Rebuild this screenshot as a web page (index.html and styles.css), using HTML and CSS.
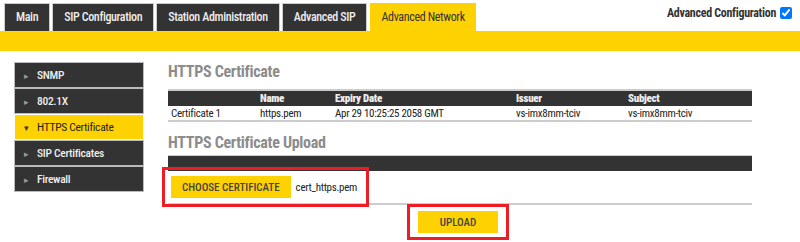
FILE: index.html
```html
<!DOCTYPE html>
<html lang="en">
<head>
    <meta charset="UTF-8">
    <meta name="viewport" content="width=device-width, initial-scale=1.0">
    <title>Advanced Network</title>
    <link rel="stylesheet" href="styles.css">
</head>
<body>
    <div class="header">
        <div class="tabs">
            <div class="tab">Main</div>
            <div class="tab">SIP Configuration</div>
            <div class="tab">Station Administration</div>
            <div class="tab">Advanced SIP</div>
            <div class="tab active">Advanced Network</div>
        </div>
        <label class="advanced">Advanced Configuration <input type="checkbox" checked></label>
    </div>
    <div class="bar"></div>

    <div class="page">
        <ul class="menu">
            <li><span class="arrow">&#9656;</span>SNMP</li>
            <li><span class="arrow">&#9656;</span>802.1X</li>
            <li class="selected"><span class="arrow">&#9662;</span>HTTPS Certificate</li>
            <li><span class="arrow">&#9656;</span>SIP Certificates</li>
            <li><span class="arrow">&#9656;</span>Firewall</li>
        </ul>

        <div class="content">
            <h3>HTTPS Certificate</h3>
            <table class="table">
                <thead>
                    <tr>
                        <th class="c1"></th>
                        <th class="c2">Name</th>
                        <th class="c3">Expiry Date</th>
                        <th class="c4">Issuer</th>
                        <th>Subject</th>
                    </tr>
                </thead>
                <tbody>
                    <tr>
                        <td>Certificate 1</td>
                        <td>https.pem</td>
                        <td>Apr 29 10:25:25 2058 GMT</td>
                        <td>vs-imx8mm-tciv</td>
                        <td>vs-imx8mm-tciv</td>
                    </tr>
                </tbody>
            </table>

            <h3 class="upload-title">HTTPS Certificate Upload</h3>
            <div class="upload-head"></div>
            <div class="upload-row">
                <div class="highlight file-box">
                    <button type="button" class="btn">CHOOSE CERTIFICATE</button>
                    <span class="filename">cert_https.pem</span>
                </div>
            </div>
            <div class="upload-actions">
                <div class="highlight">
                    <button type="button" class="btn upload">UPLOAD</button>
                </div>
            </div>
        </div>
    </div>
</body>
</html>
```

FILE: styles.css
```css
body {
    font-family: "Roboto Condensed", Roboto, sans-serif;
    font-size: 11px;
    letter-spacing: -0.3px;
    color: #222;
    margin: 0;
    background-color: #fff;
}
.header {
    display: flex;
    justify-content: space-between;
    align-items: flex-start;
    height: 31px;
}
.tabs {
    display: flex;
    align-items: flex-end;
    height: 31px;
    padding-left: 5px;
}
.tab {
    background-color: #333;
    color: #eee;
    font-size: 12px;
    font-weight: 500;
    letter-spacing: -0.35px;
    height: 27px;
    line-height: 27px;
    padding: 0 11px;
    margin-right: 4px;
    box-sizing: border-box;
    box-shadow: 0 0 0 1px #ccc;
}
.tab.active {
    background-color: #fed100;
    color: #333;
    font-weight: 400;
    height: 28px;
    line-height: 28px;
    box-shadow: none;
}
.advanced {
    display: flex;
    align-items: center;
    font-size: 12px;
    font-weight: bold;
    color: #333;
    margin-top: 6px;
    margin-right: 8px;
}
.advanced input {
    margin: 0 0 0 4px;
    width: 12px;
    height: 12px;
}
.bar {
    height: 20px;
    background-color: #fed100;
}
.page {
    display: flex;
    padding: 12px 0 0 15px;
}
.menu {
    list-style: none;
    margin: 0;
    padding: 0;
    width: 128px;
    flex-shrink: 0;
}
.menu li {
    background-color: #333;
    color: #eee;
    height: 24px;
    line-height: 24px;
    margin-bottom: 2px;
    box-sizing: border-box;
    box-shadow: 0 0 0 1px #bbb;
    font-size: 11.5px;
    font-weight: 500;
}
.menu li.selected {
    background-color: #fed100;
    color: #222;
    font-weight: 400;
    box-shadow: none;
}
.arrow {
    display: inline-block;
    width: 22px;
    padding-left: 9px;
    box-sizing: border-box;
    font-size: 9px;
    color: #999;
}
.selected .arrow {
    color: #333;
}
.content {
    margin-left: 25px;
    width: 584px;
}
h3 {
    color: #8c8c8c;
    font-size: 16px;
    margin: 0 0 8px 0;
    height: 18px;
    line-height: 18px;
}
.table {
    width: 100%;
    border-collapse: collapse;
    border-top: 2px solid #ccc;
    border-bottom: 2px solid #ccc;
}
.table th {
    background-color: #333;
    color: #eee;
    text-align: left;
    height: 15px;
    padding: 0 3px;
    font-size: 11px;
    font-weight: 900;
}
.table td {
    height: 14px;
    padding: 0 3px;
    font-size: 11px;
}
.c1 { width: 83px; }
.c2 { width: 69px; }
.c3 { width: 175px; }
.c4 { width: 106px; }
.upload-title {
    margin-top: 12px;
    margin-bottom: 3px;
}
.upload-head {
    height: 15px;
    background-color: #333;
    border-top: 1px solid #ccc;
}
.upload-row {
    display: flex;
    border-bottom: 2px solid #ccc;
    height: 32px;
}
.highlight {
    display: flex;
    align-items: center;
    border: 3px solid #ee1c25;
    box-sizing: border-box;
}
.file-box {
    flex-shrink: 0;
    margin: -4px 0 0 -6px;
    padding: 0 6px;
    width: 207px;
    height: 40px;
}
.btn {
    background-color: #fed100;
    color: #444;
    border: none;
    font-family: inherit;
    font-size: 11px;
    font-weight: 500;
    letter-spacing: 0;
    white-space: nowrap;
    height: 22px;
    padding: 0 11px;
    cursor: pointer;
}
.filename {
    margin-left: 5px;
    font-size: 11px;
}
.upload-actions {
    display: flex;
    justify-content: center;
    margin: -1px 4px 0 0;
}
.highlight .upload {
    width: 80px;
    margin: 4px 8px;
}
```
